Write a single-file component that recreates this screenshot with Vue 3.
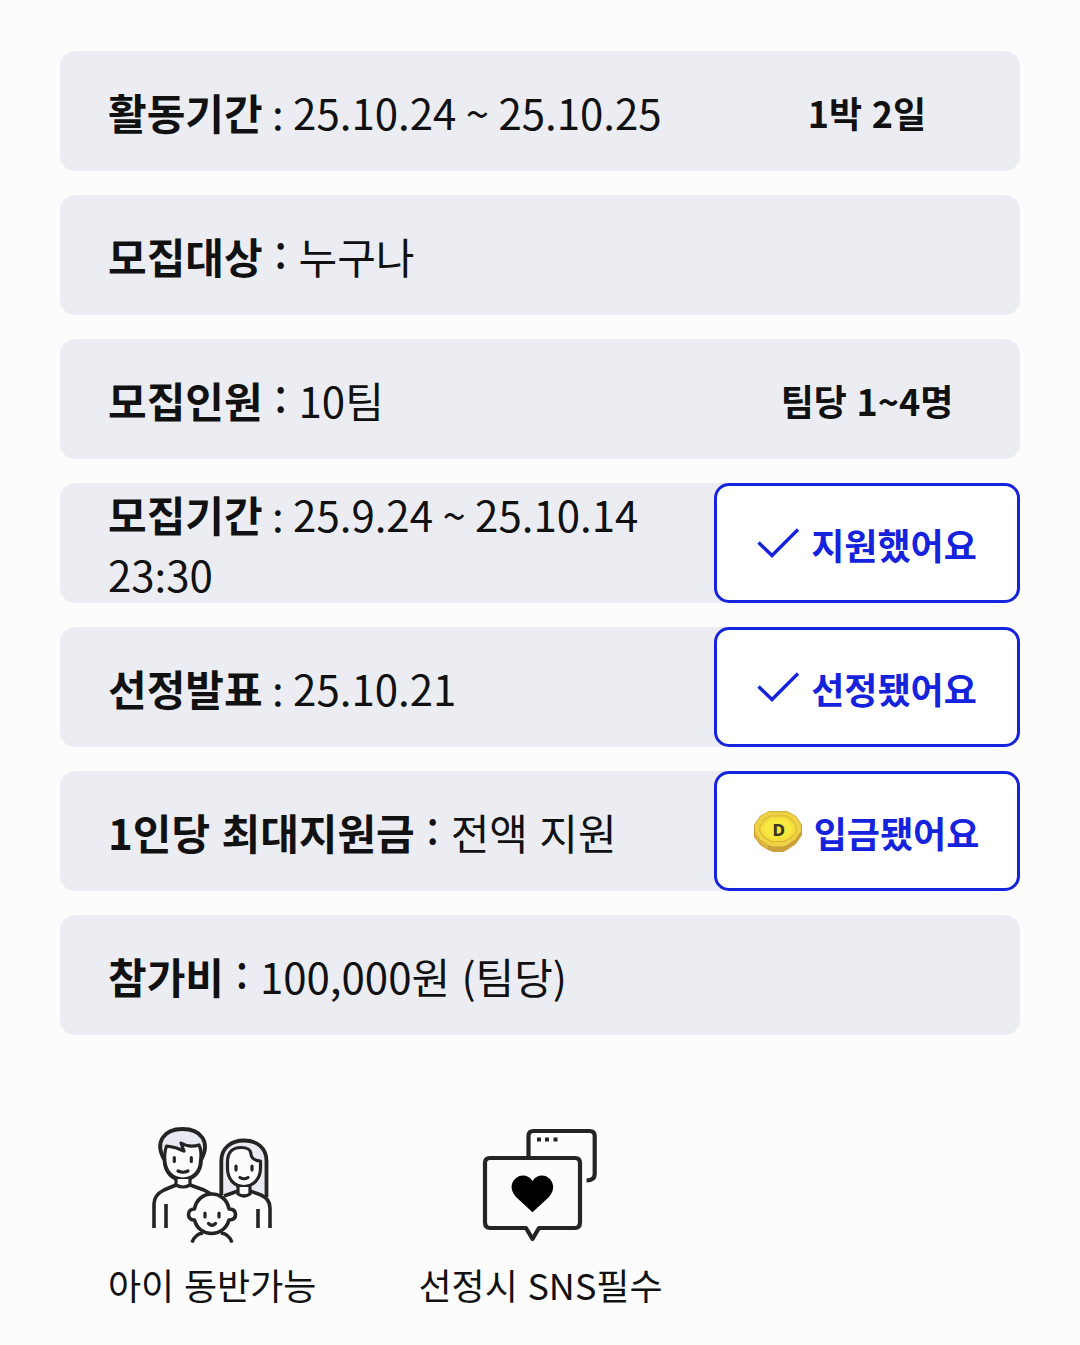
<script setup>
const rows = [
  { label: '활동기간', value: '25.10.24 ~ 25.10.25', note: '1박 2일' },
  { label: '모집대상', value: '누구나', hangul: true },
  { label: '모집인원', value: '10팀', note: '팀당 1~4명', hangul: true },
  { label: '모집기간', value: '25.9.24 ~ 25.10.14 23:30', status: '지원했어요', icon: 'check' },
  { label: '선정발표', value: '25.10.21', status: '선정됐어요', icon: 'check' },
  { label: '1인당 최대지원금', value: '전액 지원', status: '입금됐어요', icon: 'coin', hangul: true },
  { label: '참가비', value: '100,000원 (팀당)', hangul: true },
]
</script>

<template>
  <main class="page">
    <section class="rows">
      <div v-for="row in rows" :key="row.label" class="row">
        <p class="text" :class="{ hangul: row.hangul }">
          <strong>{{ row.label }}</strong>&nbsp;<span class="colon">:</span>&nbsp;{{ row.value }}
        </p>
        <div v-if="row.note" class="note">{{ row.note }}</div>
        <div v-if="row.status" class="status">
          <svg v-if="row.icon === 'check'" class="check" viewBox="0 0 48 48">
            <path d="M4.5 22.5 L18 35.5 L44 9.5" fill="none" stroke="#1623dc" stroke-width="3.4" />
          </svg>
          <svg v-else class="coin" viewBox="13 8 50 44">
            <path d="M29 10H47L56 15L62 24V34L56 43L47 49L43 51H33L28 49L20 44L14 36V24L20 15Z" fill="#c9a03a" />
            <path d="M29 10.500H47L55.500 15.500L61 24V30L55 38.500L47 44L43 45.500H33L28 44L20 38.500L15 31V24L20.500 15.500Z" fill="#efd344" />
            <path d="M15 31L20 38.500L28 44V48.500L20 43L15 36Z" fill="#dbb340" />
            <path d="M30 15H46L52 19L56 25V31L51 37L44 40.500H32L25 37L20 31V25L24.500 19Z" fill="#f4dd3d" stroke="#d5b535" stroke-width="1.100" />
            <path d="M31 18H44L49 21.500L52 26V30L48 35L42 37.500H33L28 35L24 30V26L27 21Z" fill="#f9e840" />
            <path d="M29 11H47" stroke="#d6b442" stroke-width="1" />
            <text x="38.8" y="34.6" text-anchor="middle" class="coin-letter">D</text>
          </svg>
          <span class="status-text">{{ row.status }}</span>
        </div>
      </div>
    </section>

    <section class="features">
      <figure class="feature family">
        <svg viewBox="0 0 150 135" fill="none" stroke="#242424" stroke-width="4" stroke-linecap="round" stroke-linejoin="round">
          <path d="M81 82V43C81 31 92 25.500 104 25.500C117 25.500 127 32 127 44V82L116 78L110 72H98L92 78Z" fill="#e9e9f1" stroke="none" />
          <path d="M81.300 80V46C81.300 33 91 25.500 104 25.500C117 25.500 126.500 33 126.500 46V82" stroke-linecap="butt" stroke-width="3.800" />
          <path d="M87.500 47C87.500 37 93 32.500 101 32.500C107 32.500 110.500 35 110.800 38C111 43 115 46 120.500 46V53C120.500 64 113 71.500 104 71.500C94 71.500 87.500 64 87.500 53Z" fill="#fcfcfc" stroke-width="3.200" />
          <path d="M98 72V79Q104 83 110 79V72" fill="#fcfcfc" stroke-width="3.200" />
          <path d="M84 81L98 76M110 76L121 80Q130 84 130 93V113M118 94V113" stroke-linecap="butt" stroke-width="3.600" />
          <path d="M24.500 45C14 27 24 14 42.500 14C61 14 71 27 61 45C61 57 53 65 42.500 65C32 65 25 57 24.500 45Z" fill="#e9e9f1" stroke-width="3.800" />
          <path d="M26.500 31Q36 32 44 36L41 28Q49 33 59 30Q62 36 60.500 46C60 58 52 64 43 64C33 64 26 57 25 47Q24 38 26.500 31Z" fill="#fcfcfc" stroke-width="3.200" />
          <path d="M36 64V70Q43 74 50 70V64" fill="#fcfcfc" stroke-width="3.200" />
          <path d="M14 113V89Q14 80 24 75L36 70M50 70L64 75L71 79M26 89V113" stroke-linecap="butt" stroke-width="3.600" />
          <path d="M54.500 94C58 74 85.500 74 89 94C93 94 95.500 96 95.500 99.500C95.500 103 93 105 89 105C84 123 59 123 54.500 105C51 105 48.500 103 48.500 99.500C48.500 96 51 94 54.500 94Z" fill="#fcfcfc" stroke-width="3.600" />
          <path d="M52 127.500Q55 119 63 118M81 118Q89 119 92 127.500" stroke-width="3.400" stroke-linecap="butt" />
          <path d="M34.300 42.500V46.500M51.300 42.500V46.500M38 56Q43 58.500 48 56M96 51V55M112 51V55M100 62.500Q104 65 108 62.500M65 98V102M79 98V102M68.500 108.500Q72 112 75.500 108.500" stroke-width="3.200" />
        </svg>
        <figcaption>아이 동반가능</figcaption>
      </figure>
      <figure class="feature sns">
        <svg viewBox="0 0 140 135" fill="none" stroke="#242424" stroke-width="4.200" stroke-linejoin="round">
          <path d="M58.500 42V21Q58.500 16 63.500 16H119.500Q124.700 16 124.700 21V59Q124.700 65.500 116.500 65.500" />
          <path d="M20 43H105Q110 43 110 48V107Q110 113 105 113H69L62.500 124L56 113H20Q15 113 15 107V48Q15 43 20 43Z" fill="#fcfcfc" />
          <path d="M67 22.500H71V26.500H67ZM75 22.500H79V26.500H75ZM83.500 22.500H87.500V26.500H83.500Z" fill="#242424" stroke="none" />
          <path d="M62.500 97.300L46 82C36 71 45 60.500 53 60.500Q59 60.500 62.500 66Q66 60.500 72 60.500C80 60.500 88.500 71 79 82Z" fill="#000" stroke="none" />
        </svg>
        <figcaption>선정시 SNS필수</figcaption>
      </figure>
    </section>
  </main>
</template>

<style>
body {
  background: #fcfcfc;
}
</style>

<style scoped>
.page {
  box-sizing: border-box;
  width: 1080px;
  height: 1345px;
  padding: 51px 60px 0;
  overflow: hidden;
  color: #111;
  font-family: "Noto Sans CJK KR", "Noto Sans", sans-serif;
}
.rows {
  display: flex;
  flex-direction: column;
  gap: 24.1px;
}
.row {
  display: flex;
  align-items: center;
  justify-content: space-between;
  box-sizing: border-box;
  height: 119.9px;
  padding-left: 48px;
  border-radius: 15px;
  background: #ecedf3;
}
.text {
  width: 570px;
  margin: 0;
  padding-top: 2px;
  font-size: 42px;
  line-height: 60px;
}
.text strong {
  font-weight: 700;
}
.hangul {
  word-spacing: 1.9px;
}
.hangul .colon {
  font-size: 48px;
  line-height: 0;
  vertical-align: 6px;
}
.note,
.status {
  display: flex;
  align-items: center;
  justify-content: center;
  box-sizing: border-box;
  width: 306px;
  height: 100%;
  font-size: 36px;
  font-weight: 700;
  white-space: nowrap;
}
.note {
  padding-top: 3px;
  word-spacing: 1.4px;
}
.status {
  gap: 10px;
  border: 3px solid #1623dc;
  border-radius: 15px;
  background: #fff;
  color: #1623dc;
}
.status-text {
  padding-top: 2px;
}
.check {
  width: 48px;
  height: 48px;
  margin: 2px -1px 0 -3px;
}
.coin {
  width: 50px;
  height: 44px;
  margin: 0 1px 0 -2px;
}
.coin-letter {
  font: 700 15px "DejaVu Sans", sans-serif;
  fill: #38371a;
}
.features {
  display: flex;
  gap: 102px;
  padding: 80px 0 0 48px;
}
.feature {
  display: flex;
  flex-direction: column;
  align-items: center;
  margin: 0;
}
.family svg {
  width: 150px;
  height: 135px;
  margin-left: 5px;
}
.sns svg {
  width: 140px;
  height: 135px;
  margin-right: 2px;
}
figcaption {
  margin-top: 7px;
  font-size: 36px;
  line-height: 54px;
  white-space: nowrap;
  word-spacing: 1.6px;
}
</style>
